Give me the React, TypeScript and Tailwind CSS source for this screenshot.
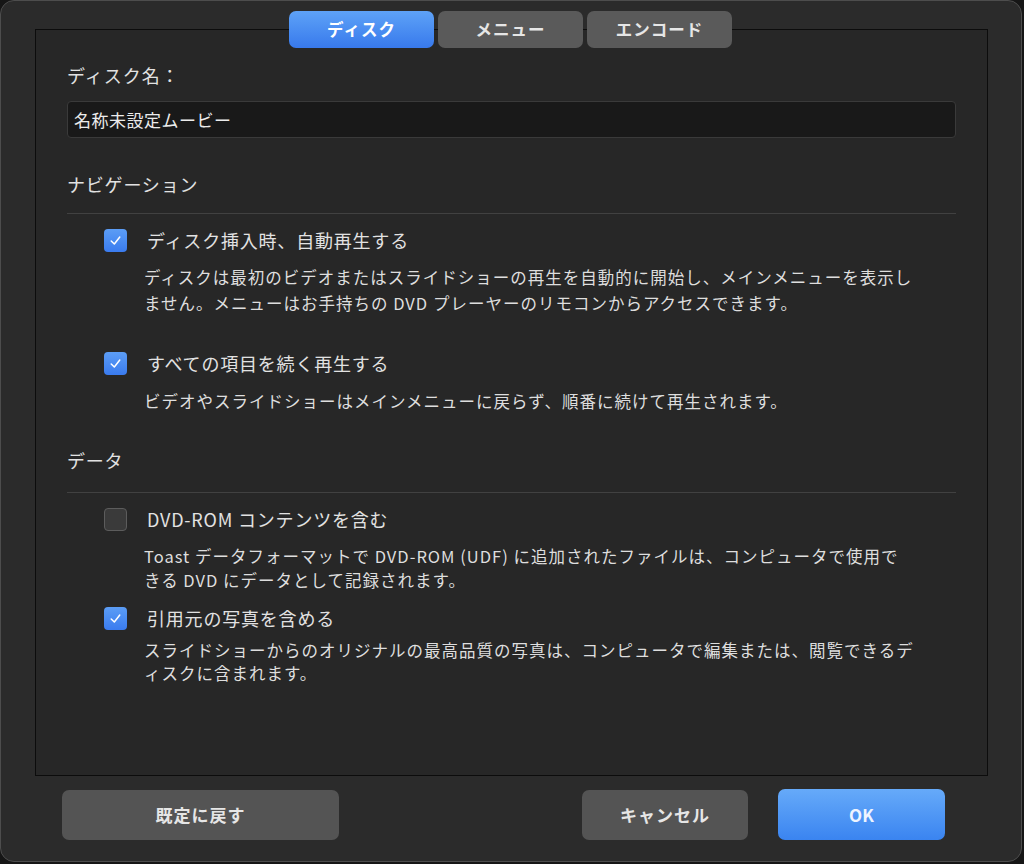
const font = { fontFamily: '"Noto Sans CJK JP", "Noto Sans", sans-serif' };

function CheckBox({ checked }: { checked: boolean }) {
  if (!checked) {
    return (
      <div className="h-[23px] w-[23px] shrink-0 rounded-[4px] border border-[#5c5c5c] bg-[#3a3a3a]" />
    );
  }
  return (
    <div className="flex h-[23px] w-[23px] shrink-0 items-center justify-center rounded-[4px] bg-gradient-to-b from-[#5c9df5] to-[#3a7bef]">
      <svg width="15" height="15" viewBox="0 0 14 14" fill="none">
        <path d="M3 7.4 L5.9 10.2 L11 3.8" stroke="white" strokeWidth="1.4" strokeLinecap="round" strokeLinejoin="round" />
      </svg>
    </div>
  );
}

function Option({
  checked,
  label,
  desc,
  className,
  descClass,
}: {
  checked: boolean;
  label: string;
  desc: string[];
  className?: string;
  descClass: string;
}) {
  return (
    <div className={className}>
      <div className="flex items-center gap-[20px] pl-[37px]">
        <CheckBox checked={checked} />
        <span className="text-[18px] tracking-[0.8px] text-[#e2e2e2]">{label}</span>
      </div>
      <div className={`pl-[77px] text-[16.5px] tracking-[1px] text-[#dedede] ${descClass}`}>
        {desc.map((d, i) => (
          <div key={i}>{d}</div>
        ))}
      </div>
    </div>
  );
}

export default function App() {
  return (
    <div className="h-[864px] w-[1024px] bg-[#161616]" style={font}>
      <div className="relative flex h-[862px] w-[1022px] flex-col rounded-[14px] border border-[#4d4d4d] bg-[#2b2b2b]">
        <div className="absolute left-[288px] top-[10px] z-10 flex gap-[4px]">
          <div className="flex h-[37px] w-[145px] items-center justify-center rounded-[7px] bg-gradient-to-b from-[#5ea2f7] to-[#3879ec] text-[16.5px] font-semibold tracking-[1px] text-white">
            ディスク
          </div>
          <div className="flex h-[37px] w-[145px] items-center justify-center rounded-[7px] bg-[#5a5a5a] text-[16.5px] font-semibold tracking-[1px] text-[#e6e6e6]">
            メニュー
          </div>
          <div className="flex h-[37px] w-[145px] items-center justify-center rounded-[7px] bg-[#5a5a5a] text-[16.5px] font-semibold tracking-[1px] text-[#e6e6e6]">
            エンコード
          </div>
        </div>

        <div className="ml-[34px] mt-[28px] h-[747px] w-[953px] border border-[#0c0c0c] bg-[#272727] px-[31px]">
          <div className="mt-[32px] text-[18px] tracking-[1px] text-[#e2e2e2]">ディスク名：</div>
          <div className="mt-[12px] flex h-[37px] items-center rounded-[4px] border border-[#3a3a3a] bg-[#191919] px-[6px] text-[17px] tracking-[0.5px] text-[#ececec]">
            名称未設定ムービー
          </div>

          <div className="mt-[33px] text-[18px] tracking-[0.8px] text-[#e2e2e2]">ナビゲーション</div>
          <div className="mt-[15px] h-px bg-[#414141]" />
          <Option
            className="mt-[13px]"
            descClass="mt-[10px] leading-[26px]"
            checked
            label="ディスク挿入時、自動再生する"
            desc={[
              'ディスクは最初のビデオまたはスライドショーの再生を自動的に開始し、メインメニューを表示し',
              'ません。メニューはお手持ちの DVD プレーヤーのリモコンからアクセスできます。',
            ]}
          />
          <Option
            className="mt-[34px]"
            descClass="mt-[11px] leading-[26px]"
            checked
            label="すべての項目を続く再生する"
            desc={['ビデオやスライドショーはメインメニューに戻らず、順番に続けて再生されます。']}
          />

          <div className="mt-[33px] text-[18px] tracking-[0.8px] text-[#e2e2e2]">データ</div>
          <div className="mt-[18px] h-px bg-[#414141]" />
          <Option
            className="mt-[13px]"
            descClass="mt-[11px] leading-[24px]"
            checked={false}
            label="DVD-ROM コンテンツを含む"
            desc={[
              'Toast データフォーマットで DVD-ROM (UDF) に追加されたファイルは、コンピュータで使用で',
              'きる DVD にデータとして記録されます。',
            ]}
          />
          <Option
            className="mt-[13px]"
            descClass="mt-[7px] leading-[23px]"
            checked
            label="引用元の写真を含める"
            desc={[
              'スライドショーからのオリジナルの最高品質の写真は、コンピュータで編集または、閲覧できるデ',
              'ィスクに含まれます。',
            ]}
          />
        </div>

        <div className="mt-[13px] flex items-center px-[61px]">
          <button className="flex h-[50px] w-[277px] items-center justify-center rounded-[7px] bg-[#545454] text-[17px] font-semibold tracking-[1px] text-[#e6e6e6]">
            既定に戻す
          </button>
          <div className="flex-1" />
          <button className="flex h-[50px] w-[166px] items-center justify-center rounded-[7px] bg-[#545454] text-[17px] font-semibold tracking-[1px] text-[#e6e6e6]">
            キャンセル
          </button>
          <button className="ml-[30px] mr-[15px] flex h-[51px] w-[167px] items-center justify-center rounded-[7px] bg-gradient-to-b from-[#66aaf9] to-[#3a84f0] text-[17px] font-semibold text-[#eef4ff]">
            OK
          </button>
        </div>
      </div>
    </div>
  );
}
